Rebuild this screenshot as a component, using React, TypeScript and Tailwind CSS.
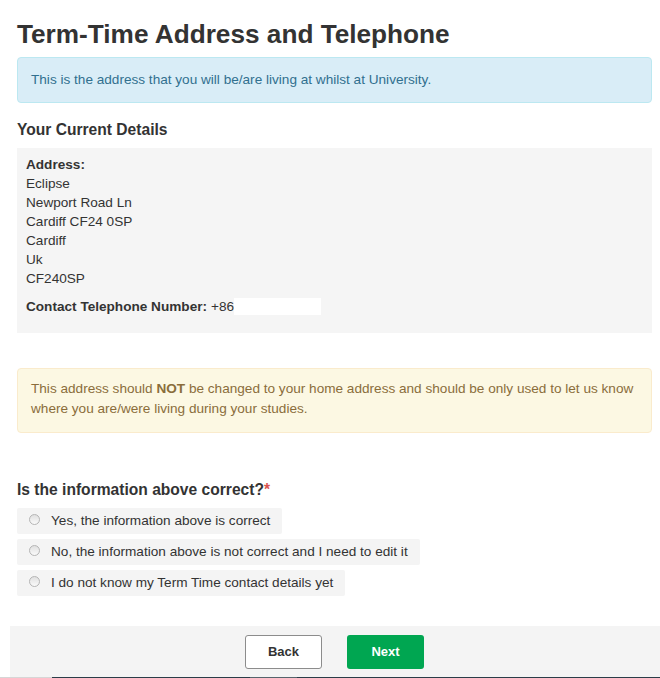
export default function App() {
  return (
    <div className="relative w-[660px] h-[678px] overflow-hidden bg-white font-['Liberation_Sans',Arial,sans-serif] text-[13.6px] text-[#333]">
      <div className="pl-[17px] pr-[8px]">
        <h1 className="pt-[17px] text-[26.2px] leading-[34px] font-bold text-[#333]">Term-Time Address and Telephone</h1>

        <div className="mt-[6px] h-[46px] flex items-center px-[13px] bg-[#d9edf7] border border-[#bce8f1] rounded-[4px] text-[#31708f] text-[13.6px]">
          This is the address that you will be/are living at whilst at University.
        </div>

        <h3 className="mt-[17px] text-[15.6px] leading-[20px] font-bold text-[#333]">Your Current Details</h3>

        <div className="mt-[8px] h-[185px] bg-[#f5f5f5] pl-[9px] pt-[7px] text-[13.6px] leading-[19px]">
          <div className="font-bold">Address:</div>
          <div>Eclipse</div>
          <div>Newport Road Ln</div>
          <div>Cardiff CF24 0SP</div>
          <div>Cardiff</div>
          <div>Uk</div>
          <div>CF240SP</div>
          <div className="mt-[9px] flex items-center">
            <span className="font-bold">Contact Telephone Number:</span>
            <span className="ml-[4px]">+86</span>
            <span className="inline-block w-[87px] h-[17px] bg-white"></span>
          </div>
        </div>

        <div className="mt-[35px] h-[65px] bg-[#fcf8e3] border border-[#faebcc] rounded-[4px] pl-[13px] pr-[10px] pt-[10px] text-[#8a6d3b] text-[13.6px] leading-[20px]">
          This address should <b>NOT</b> be changed to your home address and should be only used to let us know where you are/were living during your studies.
        </div>

        <h3 className="mt-[47px] text-[15.6px] leading-[20px] font-bold text-[#333]">
          Is the information above correct?<span className="text-[#d9534f]">*</span>
        </h3>

        <div className="mt-[8px] flex flex-col items-start gap-[5px]">
          {[
            "Yes, the information above is correct",
            "No, the information above is not correct and I need to edit it",
            "I do not know my Term Time contact details yet",
          ].map((t) => (
            <label key={t} className="h-[26px] flex items-center bg-[#f4f4f4] rounded-[2px] pl-[12px] pr-[12px]">
              <span className="w-[11px] h-[11px] rounded-full border border-[#b5b5b5] bg-gradient-to-b from-[#e0e0e0] to-[#fafafa] -mt-[3px]"></span>
              <span className="ml-[11px] text-[13.6px] text-[#333]">{t}</span>
            </label>
          ))}
        </div>
      </div>

      <div className="ml-[10px] mt-[30px] h-[51px] bg-[#f4f4f4] flex justify-center items-center gap-[25px] pr-[1px]">
        <button className="w-[77px] h-[34px] bg-white border border-[#8c8c8c] rounded-[3px] text-[13px] font-bold text-[#333]">Back</button>
        <button className="w-[77px] h-[34px] bg-[#00a651] rounded-[3px] text-[13px] font-bold text-white">Next</button>
      </div>

      <div className="flex h-[2px]">
        <div className="w-[52px] bg-[#d6d6d6]"></div>
        <div className="w-[198px] bg-[#2b3d48]"></div>
        <div className="w-[47px] bg-[#56646c]"></div>
        <div className="flex-1 bg-[#2b3d48]"></div>
      </div>
    </div>
  );
}
